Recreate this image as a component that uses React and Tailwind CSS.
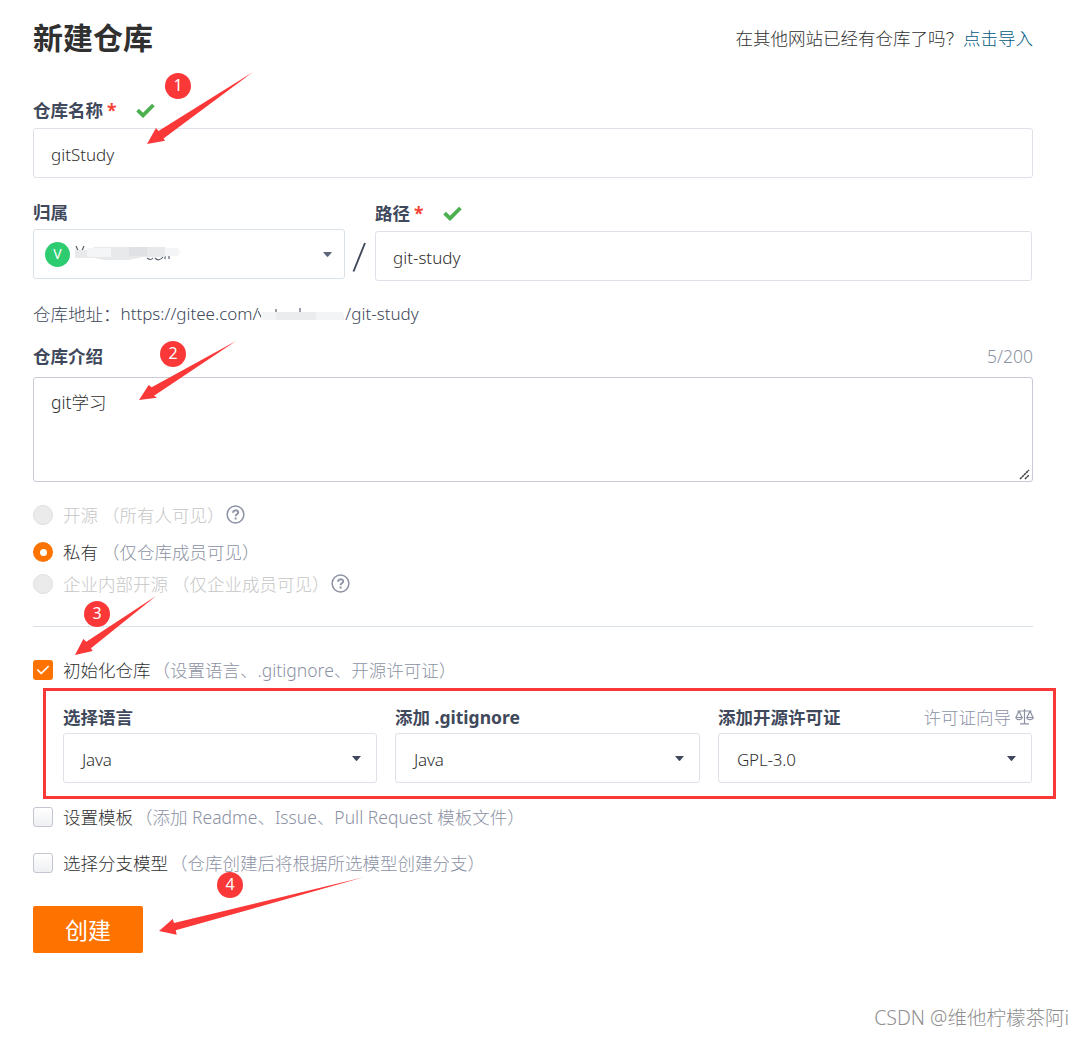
import { useState } from "react";
import clsx from "clsx";
import { FaCheck } from "react-icons/fa6";

const languages = ["Java", "Python", "Go"];
const ignores = ["Java", "Maven", "Node"];
const licenses = ["GPL-3.0", "MIT", "Apache-2.0"];

const steps = [
  { id: 1, place: "left-[165px] top-[73px]", arrow: "147,144 156,128 158.5,131 253,72 163.5,138.5 165,140.7" },
  { id: 2, place: "left-[160px] top-[341px]", arrow: "139,400 148.7,385 151.7,387.3 236,341 154,395.7 157,397.7" },
  { id: 3, place: "left-[84px] top-[601px]", arrow: "75,655 83.3,639 86.3,641.7 156,596 91,648.3 92.7,651" },
  { id: 4, place: "left-[217px] top-[872px]", arrow: "159,931 172.7,919 174,923 363.5,877.3 175.7,930.3 176.7,934.7" },
];

function Label({ children, required }) {
  return (
    <div className="flex h-[26px] items-center font-bold text-[#40485b]">
      <span>{children}</span>
      {required && (
        <>
          <span className="ml-1 text-[#f44336]">*</span>
          <GreenCheck />
        </>
      )}
    </div>
  );
}

function GreenCheck() {
  return (
    <svg className="ml-[19px] h-[15px] w-[19px]" viewBox="0 0 19 15">
      <path d="M1.6 7.2 7 12.4 17.4 2" fill="none" stroke="#4caf50" strokeWidth="3.8" />
    </svg>
  );
}

function Caret({ className }) {
  return (
    <svg className={clsx("h-[5px] w-[9px]", className)} viewBox="0 0 9 5">
      <path d="M0 0h9L5.2 4.6q-.7.6-1.4 0z" fill="currentColor" />
    </svg>
  );
}

function Select({ label, value, options, onChange, extra }) {
  const next = () => onChange(options[(options.indexOf(value) + 1) % options.length]);
  return (
    <div>
      <div className="flex h-[33px] items-center justify-between">
        <Label>{label}</Label>
        {extra}
      </div>
      <button
        type="button"
        onClick={next}
        className="flex h-[50px] w-full items-center justify-between rounded-[3px] border border-[#dfe1e8] pr-[15px] pl-[18px] text-[#303030]"
      >
        <span className="pt-[3px] text-[17px] tracking-[-0.2px]">{value}</span>
        <Caret className="text-[#40485b]" />
      </button>
    </div>
  );
}

function HelpIcon() {
  return (
    <svg className="ml-[1px] h-5 w-5 text-[#8c92a4]" viewBox="0 0 20 20" fill="none" stroke="currentColor">
      <circle cx="9.5" cy="9.5" r="8.4" strokeWidth="1.5" />
      <path d="M7 7.8c0-3.3 5.2-3.2 5.2-.3 0 1.8-2.6 1.8-2.6 3.7" strokeWidth="1.9" />
      <path d="M8.6 13.5h2" strokeWidth="2" />
    </svg>
  );
}

function ScaleIcon() {
  return (
    <svg className="h-[18px] w-[19px]" viewBox="0 0 19 18" fill="none" stroke="currentColor" strokeWidth="1.5">
      <path d="M9.5 1v14.5M5 15.8h9M2.5 3h14M4 3 1 9.5M4 3l3 6.5M15 3l-3 6.5M15 3l3 6.5" strokeWidth="1.2" />
      <path d="M.8 9.5h6.4c-.5 2.8-5.9 2.8-6.4 0zM11.8 9.5h6.4c-.5 2.8-5.9 2.8-6.4 0z" strokeWidth="1.2" />
    </svg>
  );
}

function Radio({ className, title, note, checked, disabled, onSelect, help }) {
  return (
    <div className={clsx("flex items-center", className)}>
      <button
        type="button"
        disabled={disabled}
        onClick={onSelect}
        className={clsx(
          "flex h-5 w-5 items-center justify-center rounded-full",
          checked ? "bg-[#fe7300]" : "border border-[#dfdfdf] bg-[#ebebeb]"
        )}
      >
        {checked && <span className="h-[7px] w-[7px] rounded-full bg-white" />}
      </button>
      <span className={clsx("ml-[10px]", disabled ? "text-[#c6c6c6]" : "text-[#303030]")}>{title}</span>
      <span className={clsx("ml-1", disabled ? "text-[#c6c6c6]" : "text-[#8c92a4]")}>{note}</span>
      {help && <HelpIcon />}
    </div>
  );
}

function CheckRow({ className, title, note, checked, onToggle }) {
  return (
    <div className={clsx("flex items-center", className)}>
      <button
        type="button"
        onClick={onToggle}
        className={clsx(
          "flex h-5 w-5 items-center justify-center rounded-[3px]",
          checked ? "bg-[#fe7300]" : "border border-[#c3c6cf] bg-gradient-to-b from-white to-[#eff0f3]"
        )}
      >
        {checked && <FaCheck className="h-[14px] w-[14px] text-white" />}
      </button>
      <span className="ml-[10px] text-[#303030]">{title}</span>
      <span className="ml-[2px] whitespace-pre text-[#8c92a4]">{note}</span>
    </div>
  );
}

export default function App() {
  const [name, setName] = useState("gitStudy");
  const [path, setPath] = useState("git-study");
  const [intro, setIntro] = useState("git学习");
  const [init, setInit] = useState(true);
  const [template, setTemplate] = useState(false);
  const [branch, setBranch] = useState(false);
  const [language, setLanguage] = useState("Java");
  const [ignore, setIgnore] = useState("Java");
  const [license, setLicense] = useState("GPL-3.0");

  return (
    <div className="relative h-[1037px] w-[1084px] overflow-hidden bg-white pl-[33px] font-['Noto_Sans','Noto_Sans_CJK_SC',sans-serif] text-[17.5px] leading-[26px] font-light text-[#40485b]">
      <div className="w-[1000px]">
        {/* Header */}
        <div className="flex h-[76px] items-center justify-between">
          <h1 className="text-[30px] font-bold text-[#303030]">新建仓库</h1>
          <div className="text-[#303030]">
            在其他网站已经有仓库了吗？<a className="text-[#005980]">点击导入</a>
          </div>
        </div>

        {/* Name */}
        <div className="pt-[21px]">
          <Label required>仓库名称</Label>
          <input
            value={name}
            onChange={(e) => setName(e.target.value)}
            className="mt-[5px] block h-[50px] w-full rounded-[3px] border border-[#dfe1e8] px-[17px] pt-[3px] text-[17px] text-[#303030] outline-none"
          />
        </div>

        {/* Owner and path */}
        <div className="mt-[21px] flex">
          <div className="w-[312px]">
            <Label>归属</Label>
            <button
              type="button"
              className="mt-1 flex h-[50px] w-full items-center rounded-[3px] border border-[#dae1e7] pr-3 pl-[11px]"
            >
              <span className="flex h-[25px] w-[25px] items-center justify-center rounded-full bg-[#2ecc71] text-[14px] font-normal text-white">
                V
              </span>
              <Smudge className="ml-[5px] h-[18px] w-[106px]" owner />
              <Caret className="ml-auto text-[#5b6579]" />
            </button>
          </div>
          <svg className="mt-[41px] h-[34px] w-[30px]" viewBox="0 0 30 34">
            <path d="M8.5 31.5 20 3" stroke="#40485b" strokeWidth="1.9" />
          </svg>
          <div className="w-[657px] pt-[1px]">
            <Label required>路径</Label>
            <input
              value={path}
              onChange={(e) => setPath(e.target.value)}
              className="mt-[5px] block h-[50px] w-full rounded-[3px] border border-[#dfe1e8] px-[17px] pt-[3px] text-[17px] text-[#303030] outline-none"
            />
          </div>
        </div>

        {/* Address */}
        <div className="mt-5 flex h-[26px] items-center">
          <span>仓库地址：</span>
          <span className="text-[17px]">https://gitee.com/</span>
          <Smudge className="h-[18px] w-[87px]" />
          <span className="text-[17px]">/git-study</span>
        </div>

        {/* Introduction */}
        <div className="mt-4 flex items-center justify-between">
          <Label>仓库介绍</Label>
          <span className="text-[#8c92a4]">5/200</span>
        </div>
        <div className="relative mt-2 h-[105px]">
          <textarea
            value={intro}
            onChange={(e) => setIntro(e.target.value)}
            className="block h-full w-full resize-none rounded-[3px] border border-[#c8cad6] px-[17px] pt-[11px] text-[#303030] outline-none"
          />
          <svg className="absolute right-[3px] bottom-[2px] h-[11px] w-[11px]" viewBox="0 0 11 11">
            <path d="M1 10 10 1M6 10l4-4" stroke="#404040" strokeWidth="1.5" strokeDasharray="2.4 .5" />
          </svg>
        </div>

        {/* Visibility */}
        <Radio className="mt-5 h-[26px]" title="开源" note="（所有人可见）" disabled help />
        <Radio className="mt-[11px] h-[26px]" title="私有" note="（仅仓库成员可见）" checked />
        <Radio className="mt-[6px] h-[26px]" title="企业内部开源" note="（仅企业成员可见）" disabled help />
        <div className="mt-[29px] h-px bg-[#d9e0e7]" />

        {/* Initialisation */}
        <CheckRow
          className="mt-[30px] h-[26px]"
          title="初始化仓库"
          note="（设置语言、.gitignore、开源许可证）"
          checked={init}
          onToggle={() => setInit(!init)}
        />
        <div className="mt-[17px] ml-[30px] grid w-[969px] grid-cols-[314px_305px_314px] gap-[18px]">
          <Select label="选择语言" value={language} options={languages} onChange={setLanguage} />
          <Select label="添加 .gitignore" value={ignore} options={ignores} onChange={setIgnore} />
          <Select
            label="添加开源许可证"
            value={license}
            options={licenses}
            onChange={setLicense}
            extra={
              <a className="-mr-[2px] flex items-center gap-1 text-[#8c92a4]">
                许可证向导
                <ScaleIcon />
              </a>
            }
          />
        </div>
        <CheckRow
          className="mt-[21px] h-[26px]"
          title="设置模板"
          note="（添加 Readme、Issue、Pull Request 模板文件）"
          checked={template}
          onToggle={() => setTemplate(!template)}
        />
        <CheckRow
          className="mt-5 h-[26px]"
          title="选择分支模型"
          note="（仓库创建后将根据所选模型创建分支）"
          checked={branch}
          onToggle={() => setBranch(!branch)}
        />
        <button type="button" className="mt-[30px] block h-[47px] w-[110px] rounded-[2px] bg-[#fe7300] text-[23px] font-normal text-white">
          创建
        </button>
      </div>

      {/* Annotations */}
      <div className="pointer-events-none absolute top-[688px] left-[43px] h-[111px] w-[1013px] border-3 border-[#fb3838]" />
      <svg className="pointer-events-none absolute inset-0 h-[1037px] w-[1084px]" viewBox="0 0 1084 1037">
        {steps.map((s) => (
          <polygon key={s.id} points={s.arrow} fill="#fb3838" />
        ))}
      </svg>
      {steps.map((s) => (
        <span
          key={s.id}
          className={clsx(
            "absolute flex h-[26px] w-[26px] items-center justify-center rounded-full bg-[#fb3838] pb-[3px] text-[16px] font-normal text-white",
            s.place
          )}
        >
          {s.id}
        </span>
      ))}
      <div className="absolute top-[1005px] right-[15px] text-[19.5px] whitespace-nowrap text-[#8f8f8f]">
        CSDN @维他柠檬茶阿i
      </div>
    </div>
  );
}

// Brushed-out user name
function Smudge({ className, owner }) {
  if (owner) {
    return (
      <svg className={className} viewBox="0 0 106 18">
        <path d="M1 1 5 10 9 1M72 13q4 3 6 0M80 13q4 4 8-1M90 14v-3M94 14v-3" fill="none" stroke="#59606f" strokeWidth="1.2" />
        <path d="M0 5h12l8-3h70v10H68l-14 3H28l-8-2H0z" fill="#e8e9eb" />
        <path d="M12 3h24v9H12zM90 3h13l2 3-2 5H90z" fill="#f4f5f6" />
        <path d="M54 2h18v9H54z" fill="#e0e1e4" />
      </svg>
    );
  }
  return (
    <svg className={className} viewBox="0 0 87 18">
      <path d="M0 6 4 14M18 4v5M42 3v5" fill="none" stroke="#59606f" strokeWidth="1.2" />
      <path d="M3 7h82l1 8H3z" fill="#ebecee" />
      <path d="M3 7h15v8H3zM58 7h27v8H58z" fill="#f3f4f5" />
    </svg>
  );
}
